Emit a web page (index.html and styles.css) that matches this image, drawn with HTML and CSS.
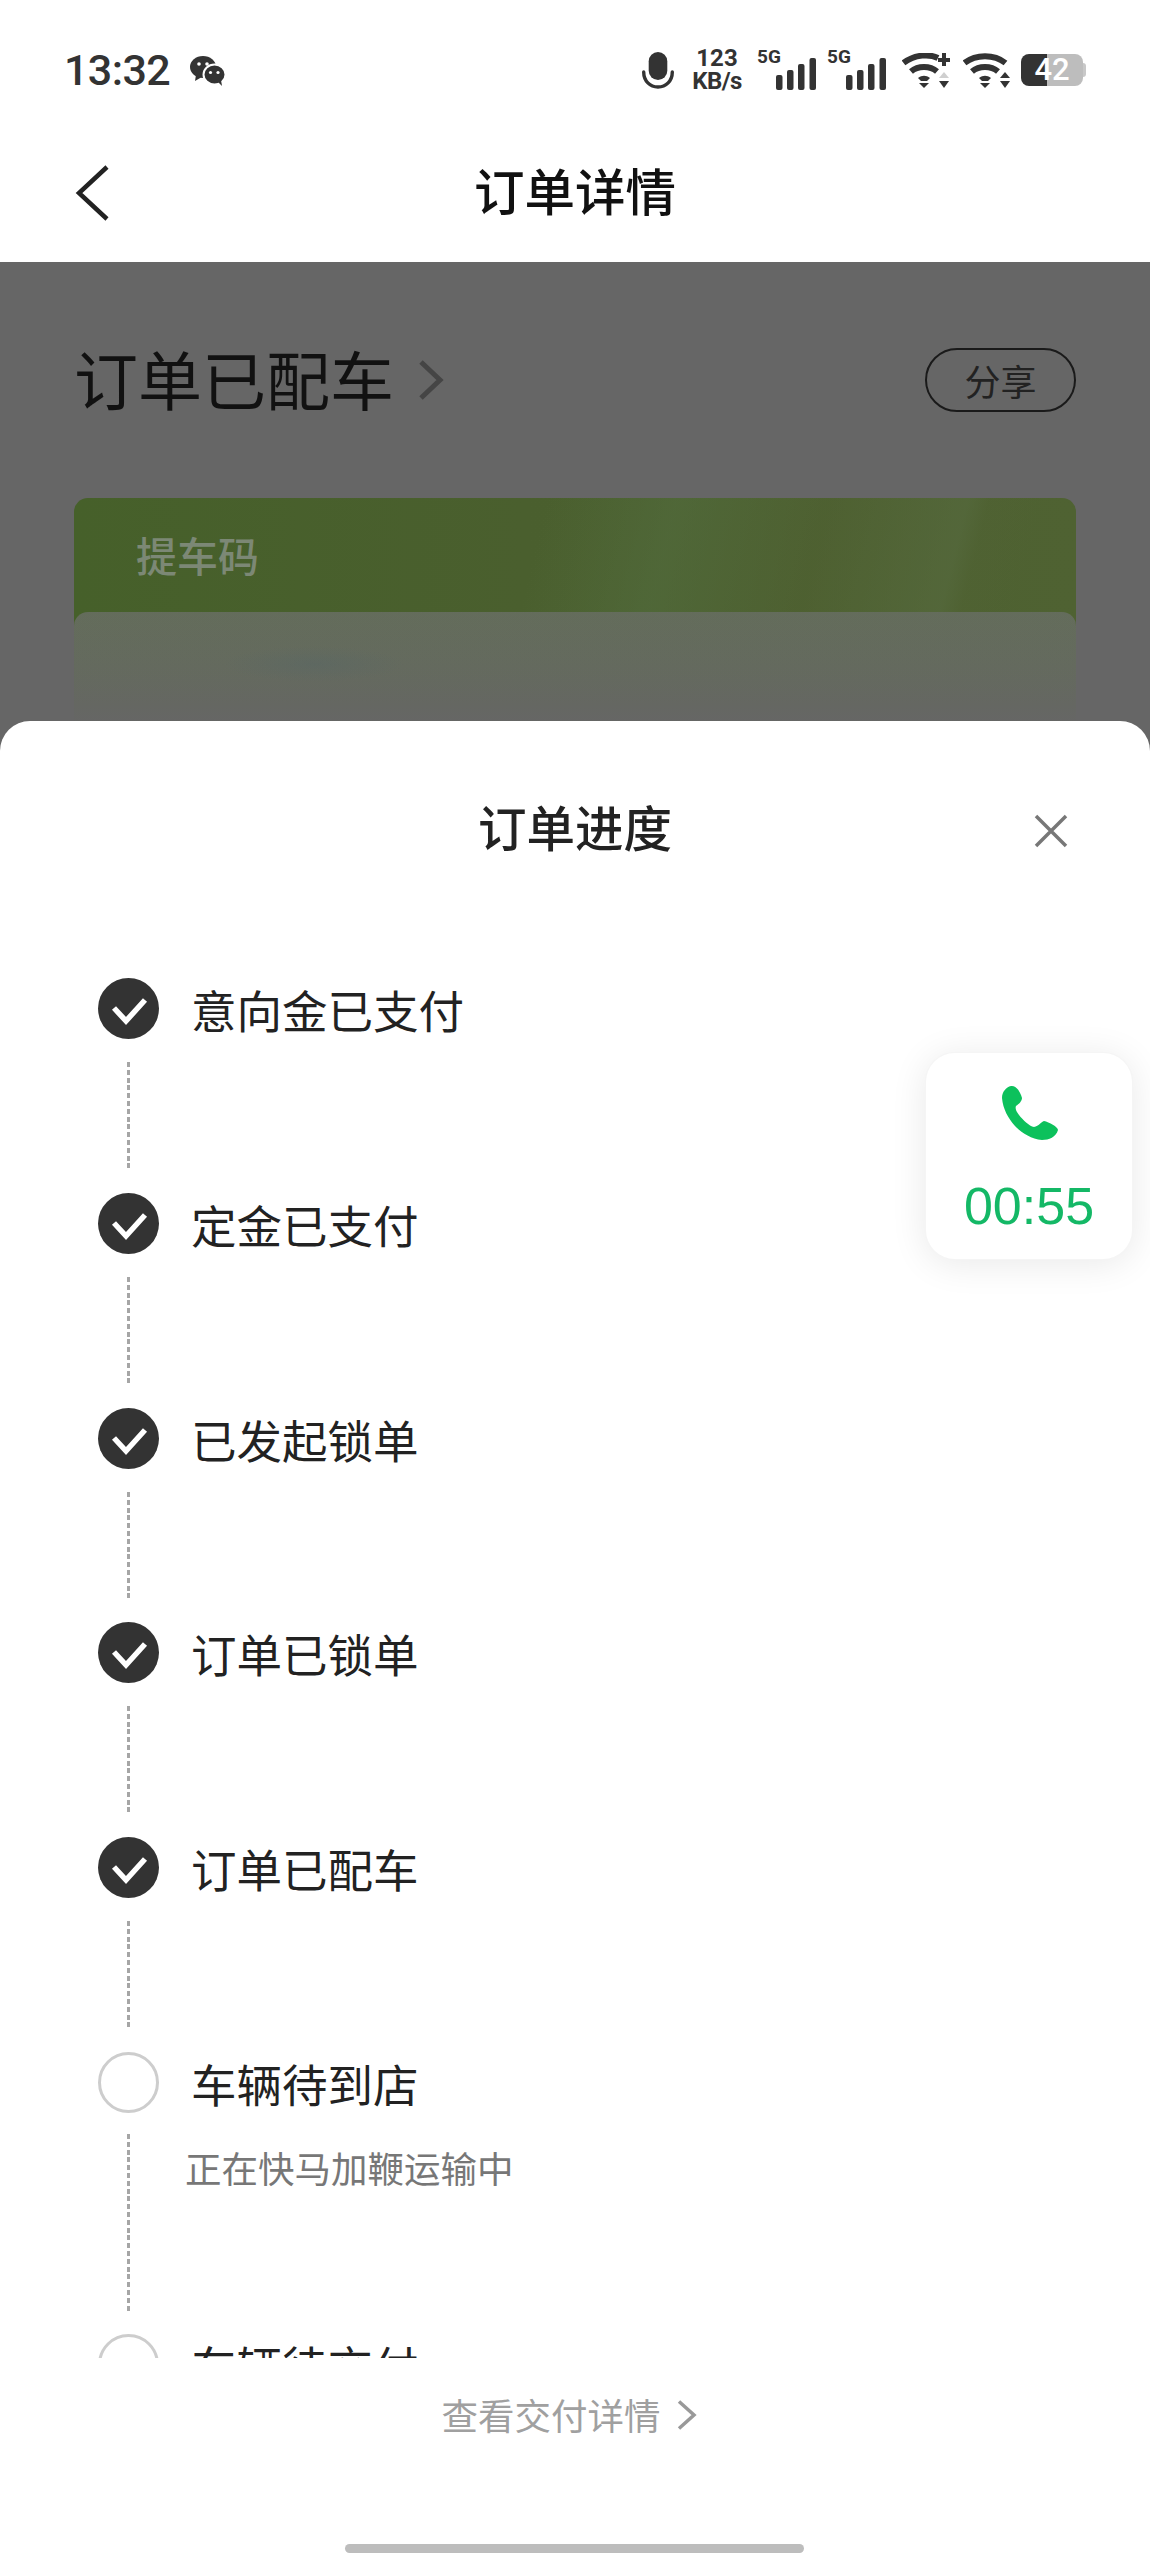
FILE: index.html
```html
<!DOCTYPE html>
<html lang="zh-CN">
<head>
<meta charset="utf-8">
<title>订单详情</title>
<link rel="stylesheet" href="styles.css">
</head>
<body>
<div class="page">
  <header class="status">
    <div class="status-left">
      <span class="clock">13:32</span>
      <svg class="wechat" viewBox="0 0 35 30"><path class="ic" d="M6 19 L5 25 L11 21.5 Z"/><ellipse class="ic" cx="13" cy="11" rx="13" ry="11"/><circle class="eye" cx="9" cy="8" r="1.8"/><circle class="eye" cx="17" cy="8" r="1.8"/><ellipse class="ic wechat-front" cx="24.5" cy="18.5" rx="11" ry="10"/><path class="ic" d="M28 26 L32 30 L31 24 Z"/><circle class="eye" cx="20.5" cy="16.5" r="1.6"/><circle class="eye" cx="28" cy="16.5" r="1.6"/></svg>
    </div>
    <div class="status-right">
      <svg class="mic" viewBox="0 0 32 37"><rect class="ic" x="6.7" y="0" width="18.6" height="28" rx="9.3"/><path class="mic-arc" d="M1.7 20 C1.7 29 8 35 16 35 C24 35 30.3 29 30.3 20"/></svg>
      <div class="speed"><span class="speed-num">123</span><span class="speed-unit">KB/s</span></div>
      <div class="sig sig-a"><span class="sig-label">5G</span><svg class="bars" viewBox="0 0 40 32"><rect class="ic" x="0" y="17" width="6.5" height="15" rx="2"/><rect class="ic" x="11" y="12" width="6.5" height="20" rx="2"/><rect class="ic" x="22" y="6" width="6.5" height="26" rx="2"/><rect class="ic" x="33.500" y="0" width="6.500" height="32" rx="2"/></svg></div>
      <div class="sig sig-b"><span class="sig-label">5G</span><svg class="bars" viewBox="0 0 40 32"><rect class="ic" x="0" y="17" width="6.5" height="15" rx="2"/><rect class="ic" x="11" y="12" width="6.5" height="20" rx="2"/><rect class="ic" x="22" y="6" width="6.5" height="26" rx="2"/><rect class="ic" x="33.500" y="0" width="6.500" height="32" rx="2"/></svg></div>
      <svg class="wifi wifi-a" viewBox="0 0 48 35"><path class="wifi-arc" d="M1.500 10 C13 1 28 1 36 5"/><path class="wifi-arc" d="M9 18.500 C16 12.500 28 12.500 35 18.500"/><path class="ic" d="M16 25 C20 22 24 22 28 25 L25 28 H19 Z"/><path class="ic" d="M17 30 H27 L22 35 Z"/><path class="wifi-plus" d="M42 0 V13 M36 7 H48"/><path class="up-dim" d="M37 25 H47 L42 19 Z"/><path class="ic" d="M37 28 H47 L42 35 Z"/></svg>
      <svg class="wifi wifi-b" viewBox="0 0 48 35"><path class="wifi-arc" d="M1.500 10 C13 1 31 1 42.500 10"/><path class="wifi-arc" d="M9 18.500 C16 12.500 28 12.500 35 18.500"/><path class="ic" d="M16 25 C20 22 24 22 28 25 L25 28 H19 Z"/><path class="ic" d="M17 30 H27 L22 35 Z"/><path class="ic" d="M37 25 H47 L42 19 Z"/><path class="ic" d="M37 28 H47 L42 35 Z"/></svg>
      <div class="battery"><div class="battery-body"><span class="battery-num">42</span></div><span class="battery-cap"></span></div>
    </div>
  </header>

  <nav class="nav">
    <svg class="nav-back" viewBox="0 0 36 56"><path d="M32 2 L4 28 L32 54"/></svg>
    <h1 class="nav-title">订单详情</h1>
  </nav>

  <main class="behind">
    <div class="order-head">
      <div class="order-state">
        <span class="order-state-text">订单已配车</span>
        <svg class="order-chevron" viewBox="0 0 26 40"><path d="M3 2 L22 20 L3 38"/></svg>
      </div>
      <button class="share">分享</button>
    </div>
    <section class="code-card">
      <div class="code-title">提车码</div>
      <div class="code-inner"></div>
    </section>
  </main>

  <aside class="sheet">
    <div class="sheet-head">
      <h2 class="sheet-title">订单进度</h2>
      <svg class="sheet-close" viewBox="0 0 34 34"><path d="M2 2 L32 32 M32 2 L2 32"/></svg>
    </div>
    <div class="steps">
      <div class="step">
        <div class="rail"><svg class="dot" viewBox="0 0 61 61"><circle class="dot-bg" cx="30.500" cy="30.500" r="30.500"/><path class="dot-check" d="M16 30 L28 43 L47 22"/></svg><span class="dash"></span></div>
        <div class="body"><div class="label">意向金已支付</div></div>
      </div>
      <div class="step">
        <div class="rail"><svg class="dot" viewBox="0 0 61 61"><circle class="dot-bg" cx="30.500" cy="30.500" r="30.500"/><path class="dot-check" d="M16 30 L28 43 L47 22"/></svg><span class="dash"></span></div>
        <div class="body"><div class="label">定金已支付</div></div>
      </div>
      <div class="step">
        <div class="rail"><svg class="dot" viewBox="0 0 61 61"><circle class="dot-bg" cx="30.500" cy="30.500" r="30.500"/><path class="dot-check" d="M16 30 L28 43 L47 22"/></svg><span class="dash"></span></div>
        <div class="body"><div class="label">已发起锁单</div></div>
      </div>
      <div class="step">
        <div class="rail"><svg class="dot" viewBox="0 0 61 61"><circle class="dot-bg" cx="30.500" cy="30.500" r="30.500"/><path class="dot-check" d="M16 30 L28 43 L47 22"/></svg><span class="dash"></span></div>
        <div class="body"><div class="label">订单已锁单</div></div>
      </div>
      <div class="step">
        <div class="rail"><svg class="dot" viewBox="0 0 61 61"><circle class="dot-bg" cx="30.500" cy="30.500" r="30.500"/><path class="dot-check" d="M16 30 L28 43 L47 22"/></svg><span class="dash"></span></div>
        <div class="body"><div class="label">订单已配车</div></div>
      </div>
      <div class="step">
        <div class="rail"><span class="dot-empty"></span><span class="dash dash-long"></span></div>
        <div class="body"><div class="label">车辆待到店</div><div class="note">正在快马加鞭运输中</div></div>
      </div>
      <div class="step">
        <div class="rail"><span class="dot-empty"></span></div>
        <div class="body"><div class="label">车辆待交付</div></div>
      </div>
    </div>
    <div class="sheet-foot">
      <a class="detail-link">查看交付详情<svg class="detail-chevron" viewBox="0 0 20 30"><path d="M2 1.500 L17 15 L2 28.500"/></svg></a>
      <span class="home-bar"></span>
    </div>
  </aside>

  <div class="call">
    <svg class="call-icon" viewBox="0 0 56 56"><path d="M9 1 C4 2 0 7 0 13 C1 24 6 33 13 41 C20 48 29 54 40 55 C47 55 54 52 56 45 C56 42 47 37 42 36 C39 37 37 41 32 42 C27 41 21 35 17 30 C14 26 13 23 14 21 C17 19 20 16 20 13 C19 9 15 0 9 1 Z"/></svg>
    <span class="call-time">00:55</span>
  </div>
</div>
</body>
</html>
```
FILE: styles.css
```css
* { box-sizing: border-box; }
html, body { margin: 0; padding: 0; background: #fff; }
body { font-family: "Noto Sans CJK SC", "Noto Sans", sans-serif; color: #222; }
h1, h2 { margin: 0; }

.page { position: relative; width: 1150px; height: 2556px; overflow: hidden; display: flex; flex-direction: column; background: #fff; }

.ic { fill: #333; }
.eye { fill: #fff; }

/* status bar */
.status { height: 120px; padding: 20px 64px 0 64px; display: flex; align-items: center; justify-content: space-between; flex: none; }
.status-left { display: flex; align-items: center; }
.clock { font-family: Roboto, sans-serif; font-size: 43px; font-weight: 500; color: #333; line-height: 50px; letter-spacing: -.6px; }
.wechat { width: 35px; height: 30px; margin-left: 20px; margin-top: 2px; }
.wechat-front { stroke: #fff; stroke-width: 2; }
.status-right { display: flex; align-items: center; }
.mic { width: 32px; height: 37px; }
.mic-arc { fill: none; stroke: #333; stroke-width: 3.4; stroke-linecap: round; }
.speed { width: 50px; margin-left: 18px; display: flex; flex-direction: column; align-items: center; font-family: Roboto, sans-serif; font-weight: 700; color: #333; }
.speed-num { font-size: 24px; line-height: 22px; }
.speed-unit { font-size: 24px; line-height: 24px; letter-spacing: -.6px; white-space: nowrap; }
.sig { position: relative; width: 59px; height: 40px; }
.sig-a { margin-left: 15px; }
.sig-b { margin-left: 11px; }
.sig-label { position: absolute; left: 0; top: -3px; font-family: Roboto, sans-serif; font-size: 19px; line-height: 20px; font-weight: 700; color: #333; }
.bars { position: absolute; right: 0; bottom: 0; width: 40px; height: 32px; }
.wifi { width: 48px; height: 35px; }
.wifi-a { margin-left: 16px; }
.wifi-b { margin-left: 13px; }
.wifi-arc { fill: none; stroke: #333; stroke-width: 6; }
.wifi-plus { fill: none; stroke: #333; stroke-width: 4; }
.up-dim { fill: #cfcfcf; }
.battery { display: flex; align-items: center; margin-left: 10px; }
.battery-body { width: 62px; height: 32px; border-radius: 8px; background: linear-gradient(90deg, #333 26px, #bdbdbd 26px); display: flex; align-items: center; justify-content: center; }
.battery-num { font-family: Roboto, sans-serif; font-size: 31px; font-weight: 500; line-height: 32px; color: #fff; }
.battery-cap { width: 3px; height: 14px; background: #c8c8c8; border-radius: 0 3px 3px 0; }

/* nav */
.nav { position: relative; height: 142px; flex: none; display: flex; align-items: center; justify-content: center; }
.nav-back { position: absolute; left: 75px; top: 45px; width: 36px; height: 56px; }
.nav-back path { fill: none; stroke: #222; stroke-width: 4.500; }
.nav-title { font-size: 50.5px; font-weight: 500; line-height: 60px; color: #111; margin-bottom: 5px; }

/* dimmed page behind the sheet */
.behind { flex: 1; background: #666; padding: 86px 74px 0 75px; }
.order-head { display: flex; align-items: center; justify-content: space-between; height: 64px; }
.order-state { display: flex; align-items: center; margin-left: -1px; }
.order-state-text { font-size: 64px; line-height: 64px; color: #111; margin-bottom: 7px; }
.order-chevron { width: 26px; height: 40px; margin-left: 24px; }
.order-chevron path { fill: none; stroke: #454545; stroke-width: 5; }
.share { width: 151px; height: 64px; border-radius: 32px; border: 2px solid #1a1a1a; background: transparent; font-family: inherit; font-size: 36px; color: #222; padding: 0; }
.code-card { margin-top: 86px; margin-left: -1px; height: 300px; border-radius: 14px 14px 0 0; overflow: hidden; background: linear-gradient(104deg, transparent 44%, rgba(84,112,66,.45) 56%, rgba(82,96,52,.25) 70%, rgba(88,108,66,.5) 83%, rgba(84,100,56,.2) 85%, transparent 90%), linear-gradient(90deg, #46602a 0%, #4a5f2e 45%, #4f6232 100%); }
.code-title { height: 114px; padding: 30px 0 0 62px; font-size: 41px; line-height: 52px; font-weight: 500; color: #7c8875; }
.code-inner { height: 186px; border-radius: 14px 14px 0 0; background: radial-gradient(ellipse 90px 18px at 240px 52px, rgba(80,100,105,.3), transparent), linear-gradient(180deg, rgba(104,104,78,.12) 0, rgba(102,102,102,0) 50%), linear-gradient(180deg, #636d5d 0%, #646a5f 30%, #656762 50%, #666 62%); }

/* bottom sheet */
.sheet { position: absolute; left: 0; right: 0; top: 721px; bottom: 0; background: #fff; border-radius: 30px 30px 0 0; display: flex; flex-direction: column; }
.sheet-head { position: relative; height: 229px; flex: none; padding-top: 75px; text-align: center; }
.sheet-title { font-size: 48.5px; font-weight: 500; line-height: 60px; color: #222; }
.sheet-close { position: absolute; left: 1034px; top: 93px; width: 34px; height: 34px; }
.sheet-close path { fill: none; stroke: #777; stroke-width: 3.500; }

.steps { height: 1408px; flex: none; padding: 28px 0 0 98px; overflow: hidden; }
.step { display: flex; }
.rail { width: 61px; flex: none; display: flex; flex-direction: column; align-items: center; }
.dot { width: 61px; height: 61px; display: block; }
.dot-bg { fill: #333; }
.dot-check { fill: none; stroke: #fff; stroke-width: 5.500; stroke-linejoin: miter; }
.dot-empty { width: 61px; height: 61px; border-radius: 50%; border: 3px solid #cdcdcd; }
.dash { display: block; width: 3px; height: 109px; margin: 23px 0 21.8px; background: repeating-linear-gradient(180deg, #a6a6a6 0, #a6a6a6 5px, transparent 5px, transparent 7.8px); }
.dash-long { height: 178px; margin: 21px 0 22px; }
.body { margin-left: 32px; padding-top: 1px; }
.label { font-size: 45.5px; line-height: 61px; color: #222; white-space: nowrap; }
.note { margin: 31px 0 0 -6px; font-size: 36.5px; line-height: 46px; color: #777; white-space: nowrap; }

.sheet-foot { flex: 1; position: relative; display: flex; flex-direction: column; align-items: center; }
.detail-link { margin-top: 33px; margin-left: -12px; height: 48px; display: flex; align-items: center; font-size: 36.5px; line-height: 48px; color: #a0a0a0; }
.detail-chevron { width: 20px; height: 30px; margin-left: 16px; }
.detail-chevron path { fill: none; stroke: #999; stroke-width: 3.500; }
.home-bar { position: absolute; left: 345px; bottom: 3px; width: 459px; height: 9px; border-radius: 5px; background: #bdbdbd; }

/* floating call widget */
.call { position: absolute; left: 925px; top: 1052px; width: 208px; height: 208px; border-radius: 30px; background: #fff; box-shadow: 0 4px 36px rgba(0,0,0,.09); border: 1px solid rgba(0,0,0,.04); display: flex; flex-direction: column; align-items: center; padding-top: 32px; }
.call-icon { width: 56px; height: 56px; margin-left: 2px; }
.call-icon path { fill: #0cc15c; }
.call-time { margin-top: 36px; font-family: "Liberation Sans", Arial, sans-serif; font-size: 52px; line-height: 58px; color: #14b866; }
```
